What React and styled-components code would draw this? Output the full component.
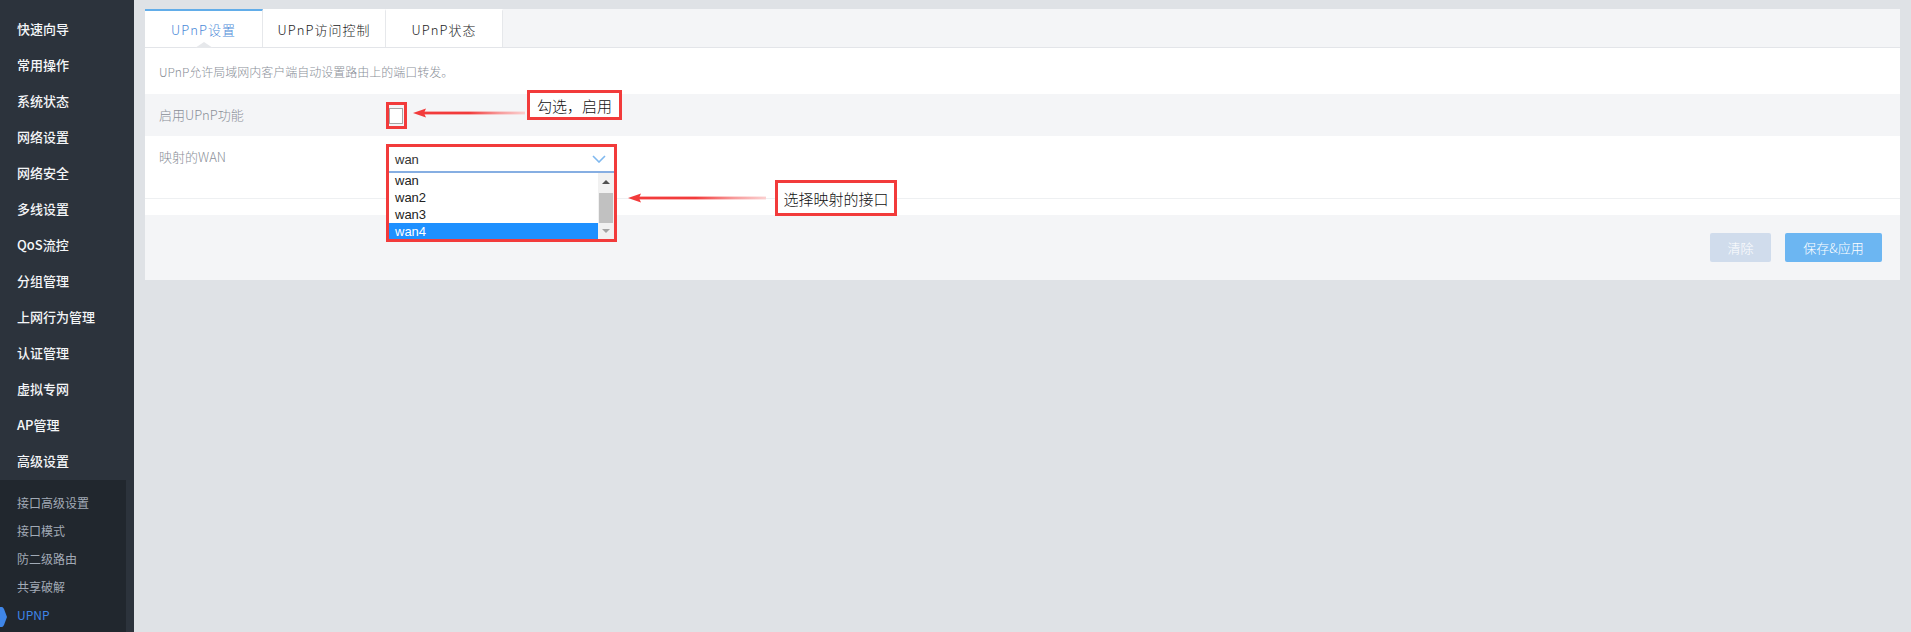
import React from 'react';
import styled, { createGlobalStyle } from 'styled-components';

const GlobalStyle = createGlobalStyle`
  html, body {
    margin: 0;
    padding: 0;
  }
  body {
    font-family: "Noto Sans CJK SC", "Noto Sans", sans-serif;
    background: #dfe2e6;
  }
  * {
    box-sizing: border-box;
  }
`;

const mainMenu = ['快速向导', '常用操作', '系统状态', '网络设置', '网络安全', '多线设置', 'QoS流控', '分组管理', '上网行为管理', '认证管理', '虚拟专网', 'AP管理', '高级设置'];
const subMenu = ['接口高级设置', '接口模式', '防二级路由', '共享破解', 'UPNP'];
const tabs = [
    { label: 'UPnP设置', width: 118 },
    { label: 'UPnP访问控制', width: 123 },
    { label: 'UPnP状态', width: 117 },
];
const wanOptions = ['wan', 'wan2', 'wan3', 'wan4'];

function Arrow({ width }) {
    const id = `fade-${width}`;
    return (
        <svg width={width} height="12" viewBox={`0 0 ${width} 12`}>
            <defs>
                <linearGradient id={id} x1="0" x2="1" y1="0" y2="0">
                    <stop offset="0" stopColor="#f23b3b" />
                    <stop offset="0.45" stopColor="#f23b3b" />
                    <stop offset="0.75" stopColor="#f79a9a" />
                    <stop offset="1" stopColor="#fbd0d0" />
                </linearGradient>
            </defs>
            <polygon points="0,6 13,1.5 11,6 13,10.5" fill="#f23b3b" />
            <rect x="10" y="4.6" width={width - 10} height="2.8" fill={`url(#${id})`} />
        </svg>
    );
}

export default function App() {
    return (
        <Page>
            <GlobalStyle />
            <Sidebar>
                {mainMenu.map(item => (
                    <MenuItem key={item}>{item}</MenuItem>
                ))}
                <SubMenu>
                    {subMenu.map(item => (
                        <SubItem key={item} $active={item === 'UPNP'}>
                            {item === 'UPNP' && (
                                <Marker width="7" height="20" viewBox="0 0 7 20">
                                    <path d="M0 0 L2 0 Q3 0 4 2 L7 10 L4 18 Q3 20 2 20 L0 20 Z" fill="#3f86e8" />
                                </Marker>
                            )}
                            {item}
                        </SubItem>
                    ))}
                </SubMenu>
            </Sidebar>
            <Main>
                <Card>
                    <TabBar>
                        {tabs.map((tab, i) => (
                            <Tab key={tab.label} $width={tab.width} $active={i === 0}>
                                {tab.label}
                            </Tab>
                        ))}
                    </TabBar>
                    <Desc>UPnP允许局域网内客户端自动设置路由上的端口转发。</Desc>
                    <FormRow $shade $height={42}>
                        <Label>启用UPnP功能</Label>
                        <RedFrame>
                            <CheckBox />
                        </RedFrame>
                    </FormRow>
                    <FormRow $height={62} $top>
                        <Label $tall>映射的WAN</Label>
                        <SelectFrame>
                            <SelectBox>
                                <span>wan</span>
                                <svg width="14" height="8" viewBox="0 0 14 8">
                                    <path d="M1 1 L7 7 L13 1" fill="none" stroke="#7fb8ef" strokeWidth="1.6" />
                                </svg>
                            </SelectBox>
                            <ListBox>
                                <Options>
                                    {wanOptions.map(opt => (
                                        <Option key={opt} $selected={opt === 'wan4'}>{opt}</Option>
                                    ))}
                                </Options>
                                <ScrollBar>
                                    <ScrollBtn>
                                        <TriUp />
                                    </ScrollBtn>
                                    <Thumb />
                                    <ScrollBtn>
                                        <TriDown />
                                    </ScrollBtn>
                                </ScrollBar>
                            </ListBox>
                        </SelectFrame>
                    </FormRow>
                    <Spacer />
                    <Footer>
                        <Button $width={61} $muted>清除</Button>
                        <Button $width={97}>保存&amp;应用</Button>
                    </Footer>

                    <ArrowBox $x={268} $y={98}>
                        <Arrow width={112} />
                    </ArrowBox>
                    <Note $x={382} $y={81} $w={95} $h={30}>勾选，启用</Note>
                    <ArrowBox $x={483} $y={183}>
                        <Arrow width={138} />
                    </ArrowBox>
                    <Note $x={630} $y={171} $w={122} $h={36}>选择映射的接口</Note>
                </Card>
            </Main>
        </Page>
    );
}

const Page = styled.div`
    display: flex;
    height: 100vh;
    overflow: hidden;
`;

const Sidebar = styled.aside`
    width: 134px;
    flex-shrink: 0;
    background: #2c333c;
    display: flex;
    flex-direction: column;
    padding-top: 11px;
`;

const MenuItem = styled.div`
    height: 36px;
    line-height: 36px;
    padding-left: 17px;
    color: #f4f6f8;
    font-size: 13px;
    font-weight: 500;
`;

const SubMenu = styled.div`
    flex: 1;
    width: 126px;
    margin-top: 1px;
    padding-top: 9px;
    background: #21272e;
`;

const SubItem = styled.div`
    position: relative;
    height: 28px;
    line-height: 28px;
    padding-left: 17px;
    font-size: 12px;
    color: ${props => (props.$active ? '#3f86e8' : '#a1aab6')};
`;

const Marker = styled.svg`
    position: absolute;
    left: 0;
    top: 6px;
`;

const Main = styled.main`
    flex: 1;
    min-width: 0;
    padding: 9px 11px;
`;

const Card = styled.div`
    position: relative;
    background: #fff;
`;

const TabBar = styled.div`
    display: flex;
    height: 39px;
    background: #f4f5f7;
    border-bottom: 1px solid #e3e5e9;
`;

const Tab = styled.div`
    position: relative;
    width: ${props => props.$width}px;
    height: 38px;
    display: flex;
    align-items: center;
    justify-content: center;
    background: #fff;
    border-right: 1px solid #e6e8eb;
    border-top: 2px solid ${props => (props.$active ? '#62ade9' : '#fff')};
    font-size: 13px;
    font-weight: 300;
    letter-spacing: 1px;
    color: ${props => (props.$active ? '#4a88d8' : '#222')};
    &::after {
        content: '';
        display: ${props => (props.$active ? 'block' : 'none')};
        position: absolute;
        left: 50%;
        bottom: -1px;
        transform: translateX(-50%);
        border-left: 9px solid transparent;
        border-right: 9px solid transparent;
        border-bottom: 6px solid #e6e8eb;
    }
`;

const Desc = styled.div`
    height: 46px;
    display: flex;
    align-items: center;
    padding-left: 14px;
    font-size: 12px;
    font-weight: 300;
    color: #8a8f98;
`;

const FormRow = styled.div`
    display: flex;
    align-items: ${props => (props.$top ? 'flex-start' : 'center')};
    height: ${props => props.$height}px;
    padding-left: 14px;
    padding-top: ${props => (props.$top ? '8px' : '0')};
    background: ${props => (props.$shade ? '#f4f5f7' : '#fff')};
`;

const Label = styled.div`
    width: 227px;
    flex-shrink: 0;
    font-size: 13px;
    font-weight: 300;
    color: #8a8f98;
    line-height: ${props => (props.$tall ? '26px' : '20px')};
`;

const RedFrame = styled.div`
    width: 21px;
    height: 27px;
    border: 3px solid #f23b3b;
    padding-top: 3px;
`;

const CheckBox = styled.div`
    width: 14px;
    height: 16px;
    background: #fff;
    border: 1px solid #a6a6a6;
`;

const SelectFrame = styled.div`
    position: relative;
    z-index: 2;
    width: 231px;
    border: 3px solid #f23b3b;
    background: #fff;
`;

const SelectBox = styled.div`
    height: 26px;
    display: flex;
    align-items: center;
    justify-content: space-between;
    padding: 0 8px 0 6px;
    border-bottom: 2px solid #86aee2;
    font-family: "Liberation Sans", Arial, sans-serif;
    font-size: 13px;
    color: #333;
`;

const ListBox = styled.div`
    display: flex;
    height: 66px;
    overflow: hidden;
`;

const Options = styled.div`
    flex: 1;
    display: flex;
    flex-direction: column;
    margin-top: -1px;
`;

const Option = styled.div`
    height: 17px;
    line-height: 17px;
    padding-left: 6px;
    font-family: "Liberation Sans", Arial, sans-serif;
    font-size: 13px;
    color: ${props => (props.$selected ? '#fff' : '#222')};
    background: ${props => (props.$selected ? '#1e90ff' : '#fff')};
`;

const ScrollBar = styled.div`
    width: 16px;
    display: flex;
    flex-direction: column;
    align-items: center;
    background: #f1f1f1;
`;

const ScrollBtn = styled.div`
    height: 18px;
    width: 100%;
    display: flex;
    align-items: center;
    justify-content: center;
    &:last-child {
        height: 16px;
    }
`;

const TriUp = styled.div`
    border-left: 4px solid transparent;
    border-right: 4px solid transparent;
    border-bottom: 4px solid #505050;
`;

const TriDown = styled.div`
    border-left: 4px solid transparent;
    border-right: 4px solid transparent;
    border-top: 4px solid #a3a3a3;
`;

const Thumb = styled.div`
    width: 14px;
    height: 30px;
    margin-top: 2px;
    background: #c1c1c1;
`;

const Spacer = styled.div`
    height: 17px;
    border-top: 1px solid #eef0f2;
`;

const Footer = styled.div`
    height: 65px;
    display: flex;
    align-items: center;
    justify-content: flex-end;
    gap: 14px;
    padding-right: 18px;
    background: #f4f5f7;
`;

const Button = styled.button`
    width: ${props => props.$width}px;
    height: 29px;
    border: none;
    border-radius: 2px;
    padding: 0;
    font-family: "Noto Sans CJK SC", sans-serif;
    font-size: 13px;
    font-weight: 300;
    color: #fff;
    background: ${props => (props.$muted ? '#d0dcec' : '#6cb6f2')};
`;

const ArrowBox = styled.div`
    position: absolute;
    left: ${props => props.$x}px;
    top: ${props => props.$y}px;
    display: flex;
    z-index: 3;
`;

const Note = styled.div`
    position: absolute;
    z-index: 3;
    left: ${props => props.$x}px;
    top: ${props => props.$y}px;
    width: ${props => props.$w}px;
    height: ${props => props.$h}px;
    display: flex;
    align-items: center;
    justify-content: center;
    border: 3px solid #f23b3b;
    background: #fff;
    font-size: 15px;
    font-weight: 300;
    color: #111;
`;
